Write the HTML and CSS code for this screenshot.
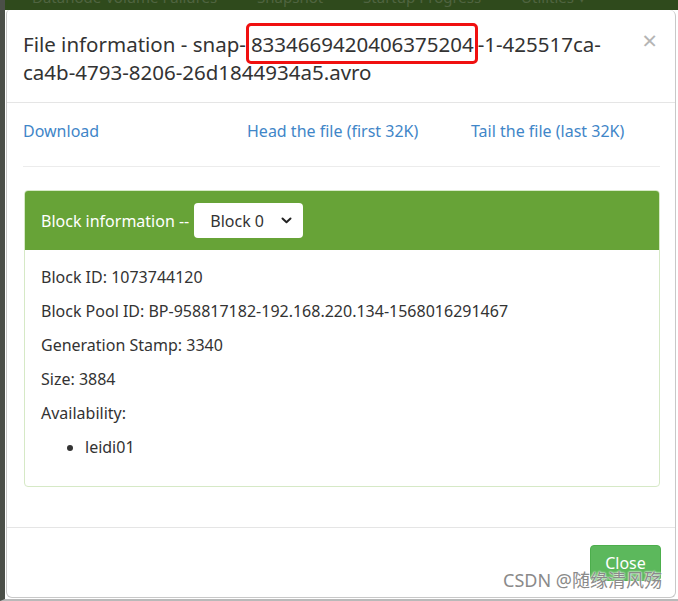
FILE: index.html
```html
<!DOCTYPE html>
<html lang="en">
<head>
    <meta charset="UTF-8">
    <meta name="viewport" content="width=device-width, initial-scale=1.0">
    <title>File information</title>
    <link rel="stylesheet" href="styles.css">
</head>
<body>
    <div class="navstrip">
        <div class="navtext">
            <span>Datanode Volume Failures</span>
            <span>Snapshot</span>
            <span>Startup Progress</span>
            <span>Utilities &#9662;</span>
        </div>
    </div>

    <div class="modal">
        <div class="modal-header">
            <span class="close">&times;</span>
            <h4 class="modal-title">File information - snap-<span class="mark">8334669420406375204</span>-1-425517ca-ca4b-4793-8206-26d1844934a5.avro</h4>
        </div>

        <div class="modal-body">
            <div class="links">
                <a href="#">Download</a>
                <a href="#">Head the file (first 32K)</a>
                <a href="#">Tail the file (last 32K)</a>
            </div>
            <hr>
            <div class="panel">
                <div class="panel-heading">
                    Block information --
                    <div class="select">
                        <span>Block 0</span>
                        <svg width="11" height="7" viewBox="0 0 11 7"><path d="M1.5 1.5 L5.5 5.2 L9.5 1.5" fill="none" stroke="#222" stroke-width="2" stroke-linecap="round" stroke-linejoin="round"/></svg>
                    </div>
                </div>
                <div class="panel-body">
                    <p>Block ID: 1073744120</p>
                    <p>Block Pool ID: BP-958817182-192.168.220.134-1568016291467</p>
                    <p>Generation Stamp: 3340</p>
                    <p>Size: 3884</p>
                    <p>Availability:</p>
                    <ul>
                        <li>leidi01</li>
                    </ul>
                </div>
            </div>
        </div>

        <div class="modal-footer">
            <button class="btn">Close</button>
        </div>

        <span class="watermark">CSDN @随缘清风殇</span>
    </div>
</body>
</html>
```

FILE: styles.css
```css
body {
    margin: 0;
    font-family: "Noto Sans", "Noto Sans CJK SC", sans-serif;
    font-size: 16px;
    color: #333;
    background: #fff;
    border-left: 5px solid #4b4f48;
    height: 599px;
    border-bottom: 2px solid #b9b9b9;
}
.navstrip {
    height: 10px;
    background: #2f4a1c;
    overflow: hidden;
    margin-left: -5px;
}
.navtext {
    margin-top: -12px;
    padding-left: 32px;
    font-size: 15px;
    line-height: 18px;
    color: #4f6440;
    white-space: nowrap;
}
.navtext span {
    margin-right: 36px;
}
.modal {
    position: relative;
    margin: 0 2px 0 1px;
    height: 588px;
    box-sizing: border-box;
    background: #fff;
    border: 1px solid #c8c8c8;
    border-top: none;
    border-radius: 4px 6px 6px 6px;
}
.modal-header {
    padding: 20px 16px 16px;
    border-bottom: 1px solid #e5e5e5;
}
.modal-title {
    margin: 0;
    font-size: 20.5px;
    font-weight: normal;
    line-height: 28px;
    color: #333;
    padding-right: 40px;
}
.mark {
    border: 3px solid #f01010;
    border-radius: 5px;
    padding: 4px 1px 3px 2px;
}
.close {
    float: right;
    margin-top: -4px;
    margin-right: 2px;
    font-size: 26px;
    line-height: 28px;
    color: #b5b5b5;
}
.modal-body {
    padding: 16px 15px 40px 16px;
}
.links {
    display: grid;
    grid-template-columns: 224px 224px 224px;
    line-height: 24px;
}
.links a {
    color: #3f86c8;
    text-decoration: none;
}
hr {
    margin: 23px 0 23px;
    border: 0;
    border-top: 1px solid #ececec;
}
.panel {
    margin: 0 0 0 1px;
    border: 1px solid #d6e9c6;
    border-radius: 4px;
}
.panel-heading {
    display: flex;
    align-items: center;
    gap: 5px;
    height: 59px;
    padding: 0 16px;
    background: #67a337;
    color: #fff;
    border-radius: 3px 3px 0 0;
}
.select {
    display: flex;
    align-items: center;
    justify-content: space-between;
    width: 109px;
    height: 35px;
    box-sizing: border-box;
    padding: 0 11px 0 16px;
    background: #fff;
    color: #333;
    border-radius: 4px;
}
.panel-body {
    padding: 15px 16px 17px;
}
.panel-body p {
    margin: 0 0 10px;
    line-height: 24px;
}
.panel-body ul {
    margin: 0 0 10px;
    padding-left: 44px;
    line-height: 24px;
}
.modal-footer {
    display: flex;
    justify-content: flex-end;
    padding: 17px 14px;
    border-top: 1px solid #e5e5e5;
}
.btn {
    width: 71px;
    height: 36px;
    font-family: inherit;
    font-size: 16px;
    color: #fff;
    background: #5cb85c;
    border: 1px solid #4cae4c;
    border-radius: 4px;
}
.watermark {
    position: absolute;
    right: 13px;
    bottom: 5px;
    font-size: 18px;
    color: #8a8a8a;
    text-shadow: 0 0 2px #fff, 0 0 2px #fff;
}
```
